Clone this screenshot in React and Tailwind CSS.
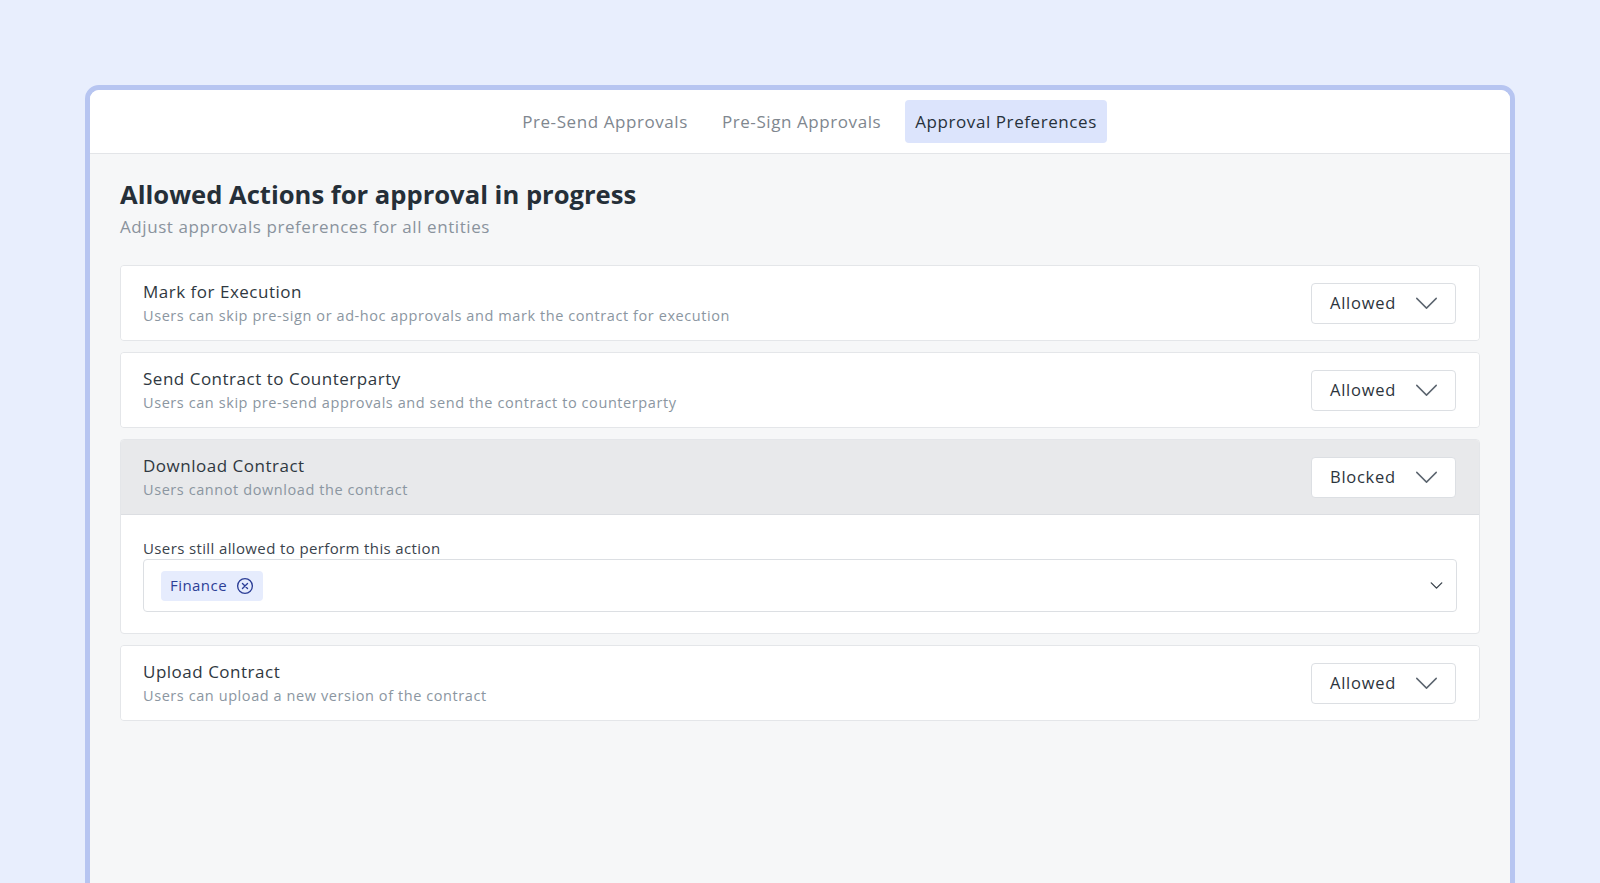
import { ChevronDown } from 'lucide-react';

const font = { fontFamily: '"Open Sans", "Liberation Sans", sans-serif' };

const Chevron = ({ className }) => (
  <svg viewBox="0 0 24 14" fill="none" stroke="currentColor" strokeWidth="1.6" strokeLinecap="round" strokeLinejoin="round" className={className}>
    <path d="M1.5 1.5 L12 12 L22.5 1.5" />
  </svg>
);

const Select = ({ value }) => (
  <div className="flex items-center justify-between w-[145px] h-[41px] pl-[18px] pr-[17px] bg-white border border-[#dcdfe3] rounded-[4px]">
    <span className="text-[16.5px] tracking-[0.045em] text-[#2c343c]">{value}</span>
    <Chevron className="w-[23px] h-[13px] text-[#5d6670]" />
  </div>
);

const RowHeader = ({ title, desc, value, gray }) => (
  <div className={`flex items-center justify-between h-[74px] pl-[22px] pr-[23px] ${gray ? 'bg-[#e8e9eb]' : 'bg-white'}`}>
    <div>
      <div className="text-[17px] tracking-[0.03em] text-[#2f3841] leading-[22px]">{title}</div>
      <div className="text-[14.5px] tracking-[0.04em] text-[#8b96a1] leading-[20px] mt-[3px]">{desc}</div>
    </div>
    <Select value={value} />
  </div>
);

const Row = (props) => (
  <div className="border border-[#e4e6e9] rounded-[4px] overflow-hidden bg-white">
    <RowHeader {...props} />
  </div>
);

export default function App() {
  return (
    <div className="min-h-screen bg-[#e8eefd] pt-[85px] px-[85px] overflow-hidden" style={font}>
      <div className="h-[820px] border-[5px] border-[#b7c5f1] rounded-t-[14px] bg-[#f6f7f8] overflow-hidden">
        {/* tabs */}
        <div className="h-[64px] bg-white border-b border-[#e3e5e8] flex items-center justify-center gap-[14px] pl-[19px]">
          <div className="px-[10px] py-[10px] text-[17px] tracking-[0.034em] text-[#80878f]">Pre-Send Approvals</div>
          <div className="px-[10px] py-[10px] text-[17px] tracking-[0.034em] text-[#80878f]">Pre-Sign Approvals</div>
          <div className="px-[10px] h-[43px] flex items-center rounded-[4px] bg-[#dce4fc] text-[17px] tracking-[0.034em] text-[#27313b]">Approval Preferences</div>
        </div>

        <div className="px-[30px] pt-[24px]">
          <h1 className="text-[25.6px] font-bold text-[#252f38] leading-[34px]">Allowed Actions for approval in progress</h1>
          <p className="text-[17px] tracking-[0.034em] text-[#8a939d] leading-[24px] mt-[3px]">Adjust approvals preferences for all entities</p>

          <div className="mt-[26px] flex flex-col gap-[11px]">
            <Row
              title="Mark for Execution"
              desc="Users can skip pre-sign or ad-hoc approvals and mark the contract for execution"
              value="Allowed"
            />
            <Row
              title="Send Contract to Counterparty"
              desc="Users can skip pre-send approvals and send the contract to counterparty"
              value="Allowed"
            />
            <div className="border border-[#e4e6e9] rounded-[4px] overflow-hidden bg-white">
              <RowHeader
                title="Download Contract"
                desc="Users cannot download the contract"
                value="Blocked"
                gray
              />
              <div className="border-t border-[#dcdee2] px-[22px] pt-[23px] pb-[21px]">
                <div className="text-[15px] tracking-[0.025em] text-[#3a434c] leading-[20px]">Users still allowed to perform this action</div>
                <div className="mt-[1px] h-[53px] border border-[#dcdfe3] rounded-[4px] flex items-center justify-between pl-[17px] pr-[9px]">
                  <div className="flex items-center gap-[9px] h-[30px] pl-[9px] pr-[9px] rounded-[4px] bg-[#e6ecfd] text-[#2d3f97]">
                    <span className="text-[15px] tracking-[0.03em]">Finance</span>
                    <svg viewBox="0 0 20 20" className="w-[18px] h-[18px]" fill="none" stroke="currentColor" strokeWidth="1.5" strokeLinecap="round">
                      <circle cx="10" cy="10" r="8.2" />
                      <path d="M7.2 7.2 L12.8 12.8 M12.8 7.2 L7.2 12.8" />
                    </svg>
                  </div>
                  <ChevronDown className="w-[21px] h-[21px] text-[#3a434c]" strokeWidth={1.6} />
                </div>
              </div>
            </div>
            <Row
              title="Upload Contract"
              desc="Users can upload a new version of the contract"
              value="Allowed"
            />
          </div>
        </div>
      </div>
    </div>
  );
}
